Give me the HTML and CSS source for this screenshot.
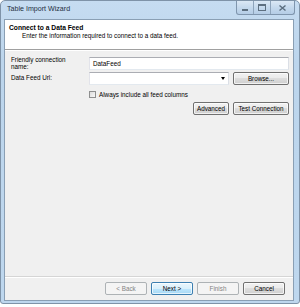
FILE: index.html
```html
<!DOCTYPE html>
<html>
<head>
<meta charset="utf-8">
<link rel="stylesheet" href="styles.css">
</head>
<body>
<div class="window">
  <div class="titlebar">
    <span class="title">Table Import Wizard</span>
    <div class="caption-btns">
      <div class="cbtn min"><span class="min-ico"></span></div>
      <div class="cbtn max"><span class="max-ico"></span></div>
      <div class="cbtn close">
        <svg width="7" height="6" viewBox="0 0 7 6"><path d="M0.5 0.5 L6.5 5.5 M6.5 0.5 L0.5 5.5" stroke="#5d6f80" stroke-width="1.4" fill="none"/></svg>
      </div>
    </div>
  </div>
  <div class="client">
    <div class="header">
      <div class="h-title">Connect to a Data Feed</div>
      <div class="h-sub">Enter the information required to connect to a data feed.</div>
    </div>
    <div class="body">
      <div class="label two">Friendly connection<br>name:</div>
      <div class="field"><div class="textbox">DataFeed</div></div>
      <div class="label">Data Feed Url:</div>
      <div class="field url-row">
        <div class="combo"><span class="arrow"></span></div>
        <div class="btn browse">Browse...</div>
      </div>
      <div></div>
      <div class="field check-row"><span class="checkbox"></span><span>Always include all feed columns</span></div>
      <div></div>
      <div class="field action-row">
        <div class="btn adv">Advanced</div>
        <div class="btn test">Test Connection</div>
      </div>
    </div>
    <div class="footer">
      <div class="btn nav disabled">&lt; Back</div>
      <div class="btn nav default">Next &gt;</div>
      <div class="btn nav disabled">Finish</div>
      <div class="btn nav">Cancel</div>
    </div>
  </div>
</div>
</body>
</html>
```
FILE: styles.css
```css
html, body {
  margin: 0;
  padding: 0;
  background: #ffffff;
}
body {
  width: 300px;
  height: 307px;
  font-family: "Liberation Sans", Arial, sans-serif;
  font-size: 6.3px;
  color: #000;
}
.window {
  box-sizing: border-box;
  width: 300px;
  height: 304px;
  border: 1px solid #7f93a8;
  border-radius: 5px 5px 3px 3px;
  background: linear-gradient(#c6dcf1, #bcd5ec 60px, #bed7ee);
  display: flex;
  flex-direction: column;
}
.titlebar {
  height: 18px;
  display: flex;
  align-items: flex-start;
  position: relative;
}
.title {
  font-size: 7.1px;
  margin: 4px 0 0 6px;
  color: #1e2f40;
}
.caption-btns {
  margin-left: auto;
  margin-right: 4px;
  display: flex;
  height: 13px;
  border: 1px solid #7f95ad;
  border-top: none;
  border-radius: 0 0 3px 3px;
  overflow: hidden;
  background: linear-gradient(#dbe8f5, #c5d9ed 50%, #b5cde6);
}
.cbtn {
  height: 13px;
  display: flex;
  align-items: center;
  justify-content: center;
}
.cbtn.min { width: 16px; border-right: 1px solid #8ea4bb; }
.cbtn.max { width: 16px; border-right: 1px solid #8ea4bb; }
.cbtn.close { width: 23px; }
.min-ico {
  width: 6px;
  height: 2px;
  background: #5d6f80;
  margin-top: 4px;
}
.max-ico {
  width: 6px;
  height: 4px;
  border: 1px solid #5d6f80;
  border-top-width: 2px;
}
.client {
  flex: 1;
  margin: 0 5px 2px 3px;
  border: 1px solid #8a9fb4;
  background: #f0f0f0;
  display: flex;
  flex-direction: column;
}
.header {
  background: #fff;
  height: 30px;
  border-bottom: 1px solid #a0a0a0;
  box-shadow: 0 1px 0 #fff;
  padding: 3px 0 0 4px;
  box-sizing: border-box;
}
.h-title {
  font-weight: bold;
  font-size: 6.7px;
  line-height: 9px;
}
.h-sub {
  margin: 0 0 0 13px;
  line-height: 8px;
}
.body {
  display: grid;
  grid-template-columns: 78px 1fr;
  row-gap: 2px;
  padding: 7px 4px 0 6px;
  align-items: center;
}
.label {
  line-height: 6.5px;
  color: #000;
}
.label.two { align-self: start; padding-top: 0; }
.field { display: flex; align-items: center; }
.textbox {
  flex: 1;
  box-sizing: border-box;
  height: 13px;
  background: #fff;
  border: 1px solid #abadb3;
  border-right-color: #dbdfe6;
  border-bottom-color: #e3e9ef;
  border-left-color: #e2e3ea;
  padding: 0 3px;
  line-height: 11px;
}
.url-row { gap: 4px; }
.combo {
  flex: 1;
  box-sizing: border-box;
  height: 13px;
  background: #fff;
  border: 1px solid #abadb3;
  border-right-color: #dbdfe6;
  border-bottom-color: #e3e9ef;
  border-left-color: #e2e3ea;
  position: relative;
}
.arrow {
  position: absolute;
  right: 3px;
  top: 4px;
  width: 0;
  height: 0;
  border-left: 2px solid transparent;
  border-right: 2px solid transparent;
  border-top: 3px solid #000;
}
.btn {
  box-sizing: border-box;
  height: 13px;
  border: 1px solid #707070;
  border-radius: 2px;
  background: linear-gradient(#f2f2f2, #ebebeb 45%, #dddddd 50%, #cfcfcf);
  display: flex;
  align-items: center;
  justify-content: center;
  box-shadow: inset 0 0 0 1px rgba(255,255,255,0.7);
  white-space: nowrap;
}
.browse { width: 56px; }
.check-row { gap: 3px; height: 12px; margin-top: 1px; }
.checkbox {
  width: 7px;
  height: 7px;
  box-sizing: border-box;
  border: 1px solid #8e8f8f;
  background: linear-gradient(135deg, #dcdcdc, #f8f8f8);
}
.action-row { justify-content: flex-end; gap: 4px; }
.adv { width: 36px; }
.test { width: 56px; }
.footer {
  margin-top: auto;
  border-top: 1px solid #d5d5d5;
  box-shadow: inset 0 1px 0 #fff;
  height: 24px;
  box-sizing: border-box;
  display: flex;
  justify-content: flex-end;
  gap: 4px;
  padding: 5px 8px 0 0;
}
.nav { width: 42px; }
.btn.disabled {
  border-color: #adb2b5;
  background: #f4f4f4;
  color: #838383;
  box-shadow: none;
}
.btn.default {
  border-color: #3c7fb1;
  background: linear-gradient(#eaf6fd, #d9f0fc 50%, #bee6fd 50%, #a7d9f5);
}
```
